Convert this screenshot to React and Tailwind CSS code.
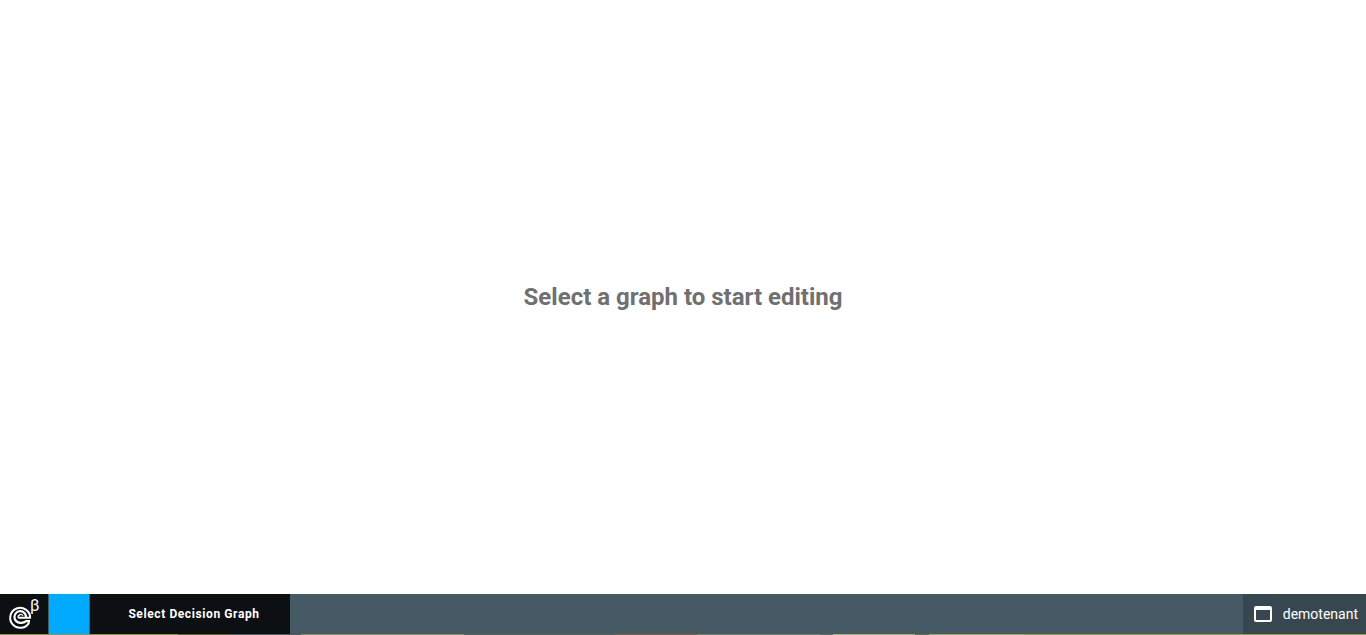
import React from "react";

function Logo() {
  return (
    <svg viewBox="0 0 48 40" className="h-10 w-12" aria-hidden="true">
      <g fill="none" stroke="#fff" strokeLinejoin="round">
        <path d="M29.2 28.2A10 10 0 1 1 30.2 23.8H18.5" strokeWidth="2" />
        <path d="M26 23.6A5.8 5.8 0 1 0 20.4 28.8Q24 29 26.2 27.2H30" strokeWidth="2.2" />
        <path d="M18.4 24.2A2.6 2.6 0 0 1 23 21.8" strokeWidth="1.2" />
      </g>
      <text x="30" y="17" fill="#fff" fontSize="16" fontFamily="Roboto, sans-serif">
        β
      </text>
    </svg>
  );
}

function WindowIcon() {
  return (
    <svg viewBox="0 0 18 16" className="h-4 w-[18px]" aria-hidden="true">
      <path
        fill="#fff"
        fillRule="evenodd"
        d="M2 0H16A2 2 0 0 1 18 2V14A2 2 0 0 1 16 16H2A2 2 0 0 1 0 14V2A2 2 0 0 1 2 0ZM2 4V14H16V4Z"
      />
    </svg>
  );
}

export default function App() {
  return (
    <div className="flex min-h-screen flex-col bg-white font-['Roboto',sans-serif]">
      <main className="flex flex-1 items-center justify-center">
        <h1 className="text-2xl font-bold text-[#707070]">Select a graph to start editing</h1>
      </main>
      <footer>
        <div className="flex h-10 bg-[#455a64] text-white">
          <button type="button" aria-label="Home" className="w-12 bg-[#0c1013]">
            <Logo />
          </button>
          <button
            type="button"
            aria-label="Graphs"
            className="w-[42px] border-x border-[#455a64] bg-[#00aaff]"
          />
          <button
            type="button"
            className="w-[200px] bg-[#0c1013] pl-2 text-center text-xs font-bold tracking-wider"
          >
            Select Decision Graph
          </button>
          <button
            type="button"
            className="ml-auto flex items-center gap-[11px] bg-[#37474f] pr-2 pl-[11px] text-sm"
          >
            <WindowIcon />
            demotenant
          </button>
        </div>
        <div className="h-px bg-[linear-gradient(to_right,#919650_0_13%,#60622f_13%_17%,#555b58_17%_22%,#878e60_22%_34%,#5a6054_34%_45%,#806048_45%_51%,#777e6b_51%_60%,#5f6b63_60%_61%,#a8ae7c_61%_67%,#66704d_67%_68%,#9ba36b_68%_75%,#949957_75%)]" />
      </footer>
    </div>
  );
}
